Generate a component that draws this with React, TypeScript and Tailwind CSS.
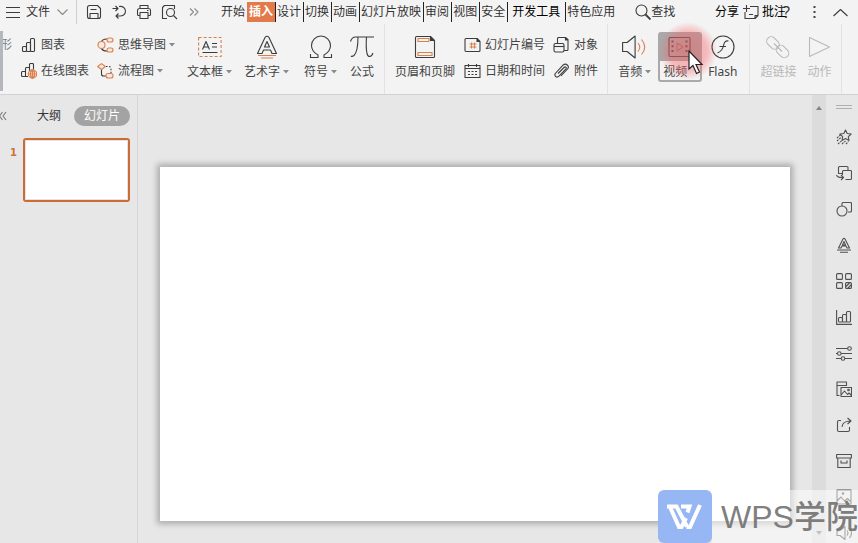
import React from 'react';

interface IconProps {
  w: number;
  h: number;
  color?: string;
  children: React.ReactNode;
}

const Icon: React.FC<IconProps> = ({ w, h, color = '#3c3c3c', children }) => (
  <svg width={w} height={h} viewBox={`0 0 ${w} ${h}`} fill="none" stroke={color} strokeWidth="1.1" strokeLinejoin="round" className="block shrink-0" aria-hidden="true">
    {children}
  </svg>
);

const ORANGE = '#d9804f';

const Caret: React.FC = () => (
  <svg width="6" height="4" viewBox="0 0 6 4" className="ml-[3px] block shrink-0" aria-hidden="true">
    <path d="M0 0h6L3 3.500z" fill="#8a8a8a" />
  </svg>
);

// Quick access bar
const SaveIcon = () => (
  <Icon w={16} h={16}>
    <path d="M3.500 1.500h8l3 3v8a2 2 0 0 1-2 2h-9a2 2 0 0 1-2-2v-9a2 2 0 0 1 2-2z" />
    <path d="M4.500 5.500h6M4 14.500V9.500h8v5" />
  </Icon>
);
const UndoIcon = () => (
  <Icon w={16} h={16}>
    <path d="M1.500 4.500h5M4.500 2L7 4.500 4.500 7M8 2.500c7.500-1.500 9 9 1.500 9.500H5M7.500 9.500L5 12l2.500 2.500" />
  </Icon>
);
const PrintIcon = () => (
  <Icon w={16} h={16}>
    <path d="M4 4.500v-3h8v3M4 11.500H2.500a1 1 0 0 1-1-1v-4a2 2 0 0 1 2-2h9a2 2 0 0 1 2 2v4a1 1 0 0 1-1 1H12M4 8.500h8v6H4zM11 6.500h1.500" />
  </Icon>
);
const PreviewIcon = () => (
  <Icon w={17} h={16}>
    <path d="M6 14.500H1.500v-11l2-2h10V5" />
    <circle cx="9.500" cy="8.500" r="4" />
    <path d="M12.500 11.500l3.500 3.500" />
  </Icon>
);

// Ribbon, small icons
const ChartIcon = () => (
  <Icon w={16} h={16}>
    <rect x="1.500" y="9.500" width="4" height="5" rx="1" />
    <rect x="5.500" y="5.500" width="4" height="9" rx="1" />
    <rect x="9.500" y="1.500" width="4" height="13" rx="1" />
  </Icon>
);
const OnlineChartIcon = () => (
  <Icon w={16} h={16}>
    <path d="M7 13.500H1.500a1 1 0 0 1-1-1v-3a1 1 0 0 1 1-1h3v5M4.500 8.500v-3a1 1 0 0 1 1-1h3V8M8.500 6V1.500a1 1 0 0 1 1-1h2a1 1 0 0 1 1 1V6" />
    <g stroke={ORANGE}>
      <circle cx="11.500" cy="11" r="4.200" fill="#fbe6da" />
      <path d="M7.500 11h8M11.500 7v8M8.500 8.800h6M8.500 13.200h6" />
      <ellipse cx="11.500" cy="11" rx="2" ry="4.200" />
    </g>
  </Icon>
);
const MindIcon = () => (
  <Icon w={17} h={16}>
    <path d="M4 5.500q1-3.500 6-3.500M4 10.500q1 3.500 6 3.500" />
    <g stroke={ORANGE} fill="#fbe9df">
      <circle cx="4.500" cy="8" r="3.500" />
      <rect x="10" y="1" width="6" height="4" rx="2" />
      <rect x="10" y="11" width="6" height="4" rx="2" />
    </g>
  </Icon>
);
const FlowIcon = () => (
  <Icon w={17} h={16}>
    <path d="M4.500 6v5a2 2 0 0 0 2 2H9" />
    <path d="M9 3.500h3a2 2 0 0 1 2 2V10" strokeDasharray="1.500 1.500" />
    <g stroke={ORANGE} fill="#fbe9df">
      <path d="M4.500.6l3.800 2.900-3.800 3L.7 3.500z" />
      <rect x="9" y="10.500" width="7" height="4.500" rx="2" />
    </g>
  </Icon>
);
const NumberIcon = () => (
  <Icon w={17} h={16}>
    <path d="M2 1.500h11l3 3v9a1 1 0 0 1-1 1H2a1 1 0 0 1-1-1v-11a1 1 0 0 1 1-1z" />
    <path d="M13 1.500v3h3" fill="#3c3c3c" />
    <path d="M7.500 5.500v6M10.500 5.500v6M5.500 7h7M5.500 10h7" stroke={ORANGE} />
  </Icon>
);
const DateIcon = () => (
  <Icon w={17} h={16}>
    <path d="M1 2.500h15v12H1zM1 5.500h15M4.500 1v3M12.500 1v3" />
    <path d="M4 8.500h9M4 11.500h9" strokeDasharray="2 1.500" />
  </Icon>
);
const ObjectIcon = () => (
  <Icon w={17} h={16}>
    <path d="M4.500 6V1.500a1 1 0 0 1 1-1h7l2.500 2v10a1 1 0 0 1-1 1h-3" />
    <path d="M12.500.500V3H15" fill="#3c3c3c" />
    <rect x="1" y="6.500" width="10" height="8.500" rx="1.500" />
    <path d="M1 9.500h10" />
  </Icon>
);
const ClipIcon = () => (
  <Icon w={17} h={16}>
    <path d="M5 10.500l6-6c1.500-1.500 3 .2 1.700 1.700L6 13.200c-2.500 2.300-5.500-.8-3.300-3.200L10 2.200c3-2.700 7 .8 4.500 3.800L8 13" />
  </Icon>
);

// Ribbon, big icons
const TextBoxIcon = () => (
  <Icon w={24} h={26}>
    <rect x=".6" y="3.500" width="22.500" height="19" stroke={ORANGE} strokeDasharray="3 2" />
    <path d="M4.500 15.500L8 7.500l3.500 8M5.700 13h4.600M14 9.500h5M14 13h5M4.500 18.500h15" />
  </Icon>
);
const WordArtIcon = () => (
  <Icon w={24} h={26}>
    <path d="M2.500 19.500L10 3.500q2-2.500 4 0l7.500 16h-4.500l-1.500-3.500h-7L7 19.500z" />
    <path d="M12 7.500l2.500 5.500h-5z" />
    <path d="M3 21.500h18M6 24h12" stroke={ORANGE} />
  </Icon>
);
const OmegaIcon = () => (
  <Icon w={24} h={26}>
    <path d="M1.500 20v3.500h7.500v-2.500C4.500 18.500 2.500 15.500 2.500 11.500a9.500 9.500 0 0 1 19 0c0 4-2 7-6.500 9.500v2.500h7.500V20" />
  </Icon>
);
const PiIcon = () => (
  <Icon w={26} h={26}>
    <path d="M1.500 7.500q1.500-4.500 5-4.500H25M9 3c0 8-.5 15-4 18.500q-2 1.500-3 .5M17.500 3c-.5 7-.5 12 .5 16.500 1 4 4.500 4 6-.5" />
  </Icon>
);
const HeaderIcon = () => (
  <Icon w={22} h={26}>
    <path d="M2.500 2.500h14l4 4v16a1 1 0 0 1-1 1h-17a1 1 0 0 1-1-1v-19a1 1 0 0 1 1-1z" />
    <path d="M16.500 2.500v4h4" fill="#3c3c3c" />
    <path d="M4 4.500h11v3H4zM4 18.500h14v3H4z" stroke={ORANGE} />
  </Icon>
);
const AudioIcon = () => (
  <Icon w={26} h={26}>
    <path d="M.6 8.500h4.500l8-6.500v22l-8-6.500H.6z" />
    <path d="M16 9q3.500 4 0 8.500M19.500 5.500q6.500 7.500 0 15" stroke={ORANGE} />
  </Icon>
);
const VideoIcon = () => (
  <Icon w={24} h={24} color="#5c4444">
    <rect x="1" y="2.500" width="21" height="19" rx="1" />
    <path d="M4.500 5.500v14M18.500 5.500v14" strokeWidth="2" strokeDasharray="2 2.700" />
    <path d="M9 8l6 4-6 4z" stroke="#b5705c" />
  </Icon>
);
const FlashIcon = () => (
  <Icon w={24} h={26}>
    <circle cx="12" cy="13" r="11" />
    <path d="M17.500 7q-4-1-5 4.500t-6 7.500M8.500 12.500h6.500" />
  </Icon>
);
const LinkIcon = () => (
  <Icon w={26} h={26} color="#b9b9b9">
    <rect x="1" y="4.500" width="14" height="9" rx="4.500" transform="rotate(45 8 9)" />
    <rect x="10.500" y="13" width="14" height="9" rx="4.500" transform="rotate(45 17.500 17.500)" />
    <path d="M9 9.500l8 8" />
  </Icon>
);
const PlayIcon = () => (
  <Icon w={24} h={26} color="#b9b9b9">
    <path d="M2.500 3.500L22.500 13l-20 9.500z" />
  </Icon>
);

const TABS = ['设计', '切换', '动画', '幻灯片放映', '审阅', '视图', '安全'];

const SmallButton: React.FC<{ icon: React.ReactNode; label: string; caret?: boolean }> = ({ icon, label, caret }) => (
  <button className="flex h-[26px] items-center gap-1 whitespace-nowrap">
    {icon}
    <span className="flex items-center">
      {label}
      {caret && <Caret />}
    </span>
  </button>
);

const BigButton: React.FC<{ icon: React.ReactNode; label: string; caret?: boolean; disabled?: boolean }> = ({ icon, label, caret, disabled }) => (
  <button disabled={disabled} className="flex shrink-0 flex-col items-center whitespace-nowrap pt-[10px] disabled:text-[#b9b9b9]">
    {icon}
    <span className="mt-[2px] flex items-center leading-5">
      {label}
      {caret && <Caret />}
    </span>
  </button>
);

const Divider = () => <div className="w-px shrink-0 self-stretch bg-[#e2e2e2]" />;

const TopBar: React.FC = () => (
  <header className="flex h-6 shrink-0 items-center whitespace-nowrap text-[#333]">
    <button className="ml-[6px] flex items-center">
      <Icon w={14} h={12}>
        <path d="M0 1.500h14M0 6.500h14M0 11.500h14" />
      </Icon>
      <span className="ml-[6px]">文件</span>
      <span className="ml-[7px]">
        <Icon w={11} h={8} color="#8a8a8a">
          <path d="M.5 1.500l5 5 5-5" />
        </Icon>
      </span>
    </button>
    <div className="ml-2 h-6 w-px bg-[#cfcfcf]" />
    <div className="ml-[9px] flex items-center gap-[9px]">
      <button aria-label="保存"><SaveIcon /></button>
      <button aria-label="撤销"><UndoIcon /></button>
      <button aria-label="打印"><PrintIcon /></button>
      <button aria-label="预览"><PreviewIcon /></button>
    </div>
    <button className="ml-[11px]" aria-label="更多">
      <Icon w={10} h={8} color="#8a8a8a">
        <path d="M1 .5l3.500 3.500L1 7.500M5.500 .5L9 4 5.500 7.500" />
      </Icon>
    </button>
    <nav className="ml-[22px] flex items-center leading-5">
      <button className="pr-[2px]">开始</button>
      <button className="bg-[#e37a4b] px-[2px] font-bold text-white">插入</button>
      {TABS.map((tab) => (
        <button key={tab} className="border-l border-[#222] pl-px pr-[2px]">{tab}</button>
      ))}
      <button className="border-l border-[#222] pl-1 pr-[5px] text-black">开发工具</button>
      <button className="border-l border-[#222] pl-px">特色应用</button>
    </nav>
    <button className="ml-5 flex items-center">
      <Icon w={16} h={16}>
        <circle cx="6.500" cy="6.500" r="5.500" />
        <path d="M10.500 10.500l5 5" strokeWidth="1.800" />
      </Icon>
      查找
    </button>
    <div className="ml-auto flex items-center pr-[10px]">
      <button className="text-black">分享</button>
      <button className="ml-1 flex items-center gap-[3px] text-black">
        <Icon w={16} h={16}>
          <path d="M7 2.500h8v9l-3 3H2V8M0 4.500h7M3.500 1v7M12 14.500v-3h3M6 10.500h4" />
        </Icon>
        批注
      </button>
      <button className="-ml-[3px] text-base leading-5" aria-label="帮助">?</button>
      <button className="ml-[23px]" aria-label="更多选项">
        <svg width="3" height="14" viewBox="0 0 3 14" fill="#444" className="block" aria-hidden="true">
          <path d="M.5 1h2v2h-2zM.5 6h2v2h-2zM.5 11h2v2h-2z" />
        </svg>
      </button>
      <button className="ml-[17px]" aria-label="收起">
        <Icon w={15} h={9}>
          <path d="M.5 8l7-6.500 7 6.500" />
        </Icon>
      </button>
    </div>
  </header>
);

const VideoButton: React.FC = () => (
  <button className="relative ml-[7px] mt-2 flex h-[50px] w-11 shrink-0 flex-col rounded-[3px] border-2 border-[#a9a9a9]">
    <span className="-mt-px flex h-7 w-full shrink-0 items-center justify-center bg-[#a9a9a9]">
      <VideoIcon />
    </span>
    <span className="flex pl-[3px] pt-px leading-5">视频</span>
    <span className="absolute -left-px -top-3 size-[58px] rounded-full bg-[radial-gradient(circle_closest-side,rgba(244,90,95,0.46)_0%,rgba(246,100,105,0.4)_65%,rgba(250,150,150,0)_100%)]" />
    <svg width="16" height="26" viewBox="0 0 16 26" className="absolute left-7 top-4" aria-hidden="true">
      <path d="M1 1v18l4-3.500 3.500 8 3-1.500L8 14.500h6z" fill="#fff" stroke="#222" strokeWidth="1.200" />
    </svg>
  </button>
);

const Ribbon: React.FC = () => (
  <div className="flex h-[71px] shrink-0 border-b border-[#d2d2d2] text-[#444]">
    <div className="mt-[7px] h-[60px] w-[3px] shrink-0 bg-[#b4b8be]" />
    <div className="mt-2 flex h-[26px] w-[9px] shrink-0 items-center justify-end overflow-hidden text-[#7a7f88]">形</div>
    <div className="ml-[9px] mt-2 flex shrink-0 flex-col">
      <SmallButton icon={<ChartIcon />} label="图表" />
      <SmallButton icon={<OnlineChartIcon />} label="在线图表" />
    </div>
    <div className="ml-2 mt-2 flex shrink-0 flex-col">
      <SmallButton icon={<MindIcon />} label="思维导图" caret />
      <SmallButton icon={<FlowIcon />} label="流程图" caret />
    </div>
    <div className="ml-3 flex shrink-0 gap-3">
      <BigButton icon={<TextBoxIcon />} label="文本框" caret />
      <BigButton icon={<WordArtIcon />} label="艺术字" caret />
      <span className="ml-[3px] flex gap-3">
        <BigButton icon={<OmegaIcon />} label="符号" caret />
        <BigButton icon={<PiIcon />} label="公式" />
      </span>
    </div>
    <div className="ml-[9px] mr-[10px] flex">
      <Divider />
    </div>
    <BigButton icon={<HeaderIcon />} label="页眉和页脚" />
    <div className="ml-[9px] mt-2 flex shrink-0 flex-col">
      <SmallButton icon={<NumberIcon />} label="幻灯片编号" />
      <SmallButton icon={<DateIcon />} label="日期和时间" />
    </div>
    <div className="ml-2 mt-2 flex shrink-0 flex-col">
      <SmallButton icon={<ObjectIcon />} label="对象" />
      <SmallButton icon={<ClipIcon />} label="附件" />
    </div>
    <div className="ml-[9px] mr-[10px] flex">
      <Divider />
    </div>
    <BigButton icon={<AudioIcon />} label="音频" caret />
    <VideoButton />
    <div className="ml-[6px] flex">
      <BigButton icon={<FlashIcon />} label="Flash" />
    </div>
    <div className="ml-3 mr-[10px] flex">
      <Divider />
    </div>
    <div className="flex gap-[11px]">
      <BigButton icon={<LinkIcon />} label="超链接" disabled />
      <BigButton icon={<PlayIcon />} label="动作" disabled />
    </div>
    <div className="ml-[10px] flex">
      <Divider />
    </div>
  </div>
);

const SIDE_TOOLS: { name: string; shape: React.ReactNode }[] = [
  {
    name: '动画',
    shape: (
      <>
        <path d="M9.500 1l1.700 3.500 4 .5-2.900 2.700.7 3.800-3.500-1.900L6 11.500l.7-3.800L3.800 5l4-.5z" />
        <path d="M1 9l4-3.500M1 12l4-3.500M2 15l3.500-3M6 15l3.500-3M10 15l2.500-2.500" strokeDasharray="2 1" />
      </>
    ),
  },
  {
    name: '切换',
    shape: <path d="M2.500 9V2.500a1 1 0 0 1 1-1H11a1 1 0 0 1 1 1v3M6.500 10V6.500a1 1 0 0 1 1-1h7a1 1 0 0 1 1 1v7a1 1 0 0 1-1 1H9.500M2.500 8.500h4M.5 10q1 3 7 2.500M5 10l2.500 2.500L5 15" />,
  },
  {
    name: '形状',
    shape: (
      <>
        <path d="M6 5V2.500a1 1 0 0 1 1-1h7.500a1 1 0 0 1 1 1V10a1 1 0 0 1-1 1H12" />
        <circle cx="6" cy="10" r="5" />
      </>
    ),
  },
  {
    name: '艺术字',
    shape: <path d="M2.500 11L7 2q1-1.500 2 0l4.500 9H11l-1-2H6l-1 2zM8 4.500L9.500 8h-3zM1 13h14M4 15.300h8" />,
  },
  {
    name: '版式',
    shape: (
      <>
        <rect x=".6" y=".6" width="5.800" height="5.800" rx="1" />
        <rect x="9.600" y=".6" width="5.800" height="5.800" rx="1" />
        <rect x=".6" y="9.600" width="5.800" height="5.800" rx="1" />
        <rect x="9.600" y="9.600" width="5.800" height="5.800" rx="1" />
        <path d="M10 13.500l3.500-3.500M12 15l3.500-3.500" />
      </>
    ),
  },
  {
    name: '图表',
    shape: (
      <>
        <path d="M.6 1v14.400H16" />
        <rect x="2.500" y="8.500" width="4" height="4.500" rx="1" />
        <rect x="6.500" y="5.500" width="4" height="7.500" rx="1" />
        <rect x="10.500" y="2.500" width="4" height="10.500" rx="1" />
      </>
    ),
  },
  {
    name: '设置',
    shape: (
      <>
        <path d="M0 3.500h11.500M5 8.500h11M0 8.500h1.500M0 13.500h5M9 13.500h7" />
        <circle cx="13.500" cy="3.500" r="1.800" />
        <circle cx="3.300" cy="8.500" r="1.800" />
        <circle cx="7" cy="13.500" r="1.800" />
      </>
    ),
  },
  {
    name: '素材',
    shape: (
      <>
        <path d="M3.500 14.500H1V1h9.500v3.500H1M5 6.500h10.500v9H5zM5 14l3.500-4 3 3.500 1.500-1.500 2.500 2.500" />
        <circle cx="12.500" cy="9" r=".8" />
      </>
    ),
  },
  {
    name: '分享',
    shape: <path d="M5 3.500H3a1.500 1.500 0 0 0-1.500 1.500v8A1.500 1.500 0 0 0 3 14.500h9a1.500 1.500 0 0 0 1.500-1.500v-3M6 10q.5-6 8.500-6M11.500 1l3.500 3-3.500 3" />,
  },
  {
    name: '收纳',
    shape: <path d="M.6 1.500h14.800v3.500H.6zM1.800 5v9.500h12.400V5M5 7.500v2.500h6V7.500" />,
  },
  {
    name: '图片',
    shape: (
      <>
        <path d="M1 1h14v14H1zM1 12l4-4 3.500 4 3-2.500L15 13" />
        <circle cx="7" cy="4.500" r=".8" />
      </>
    ),
  },
  {
    name: '声音',
    shape: <path d="M1 5.500h3l5-4v13l-5-4H1zM11 5.500q2 2.500 0 5M13.500 3q4 5 0 10" />,
  },
];

const SlidePanel: React.FC = () => (
  <aside className="w-[138px] shrink-0 border-r border-[#d6d6d6]">
    <div className="flex items-center pt-[11px]">
      <button aria-label="折叠">
        <Icon w={7} h={10} color="#777">
          <path d="M2.500 1l-3 4 3 4M6 1L3 5l3 4" />
        </Icon>
      </button>
      <button className="ml-[30px] text-[#333]">大纲</button>
      <button className="ml-[13px] h-5 rounded-full bg-[#a3a3a3] px-[10px] text-white">幻灯片</button>
    </div>
    <div className="mt-3 flex">
      <span className="w-[23px] pl-[10px] pt-2 font-['DejaVu_Sans'] text-[10px] font-bold text-[#d2703a]">1</span>
      <button aria-label="幻灯片 1" className="h-16 w-[107px] rounded-[3px] border-2 border-[#cc6c35]">
        <span className="block h-full border border-[#e3e3e3] bg-white" />
      </button>
    </div>
  </aside>
);

const Watermark: React.FC = () => (
  <div className="absolute bottom-0 right-0 flex h-[53px]">
    <div className="flex w-[54px] items-center justify-center rounded-md bg-[#97b6f4]">
      <svg width="36" height="26" viewBox="0 0 36 26" fill="none" stroke="#fff" strokeWidth="4" strokeLinejoin="miter" aria-hidden="true">
        <path d="M0 2.500h9.500L20 22.500M3 3l9 20h2.500L19 14" />
        <path d="M14 2.500h8.500l-2 6M19.500 23h3.500L33 1" />
      </svg>
    </div>
    <div className="flex w-[146px] items-center whitespace-nowrap bg-white/50 pl-[9px] font-['Liberation_Sans','Noto_Sans_CJK_SC',sans-serif] text-[32px] font-medium leading-none text-[#6e6e6e]/90">
      WPS学院
    </div>
  </div>
);

const App: React.FC = () => {
  return (
    <div className="relative flex h-screen flex-col overflow-hidden bg-[#f3f3f3] font-['Noto_Sans','Noto_Sans_CJK_SC',sans-serif] text-xs">
      <TopBar />
      <Ribbon />
      <main className="flex min-h-0 flex-1 bg-[#e7e7e7]">
        <SlidePanel />
        <section className="min-w-0 flex-1 px-[22px] pt-[72px]">
          <div className="aspect-video w-full bg-white shadow-[0_0_6px_3px_rgba(0,0,0,0.26)]" />
        </section>
        <div className="flex w-[14px] shrink-0 flex-col items-center justify-between bg-[#dcdcdc] pb-2 pt-[11px]">
          <svg width="6" height="4" viewBox="0 0 6 4" fill="#858585" aria-hidden="true"><path d="M0 4h6L3 0z" /></svg>
          <svg width="6" height="4" viewBox="0 0 6 4" fill="#858585" aria-hidden="true"><path d="M0 0h6L3 4z" /></svg>
        </div>
        <aside className="flex w-8 shrink-0 flex-col items-center gap-5 overflow-hidden pl-1 pt-[10px]">
          <div className="h-1 w-4 shrink-0 border-y border-[#b0b0b0]" />
          {SIDE_TOOLS.map((tool) => (
            <button key={tool.name} aria-label={tool.name}>
              <Icon w={16} h={16} color="#505050">{tool.shape}</Icon>
            </button>
          ))}
        </aside>
      </main>
      <Watermark />
    </div>
  );
};

export default App;
